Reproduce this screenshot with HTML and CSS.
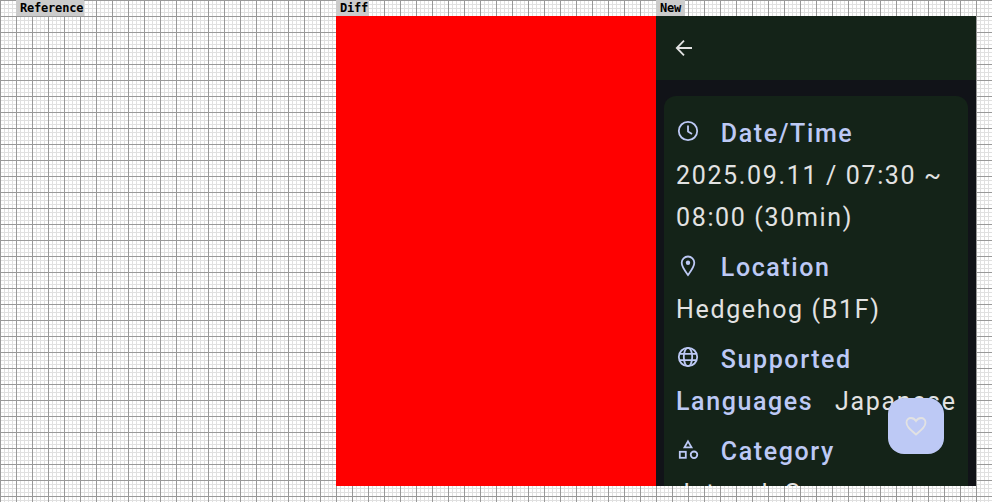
FILE: index.html
```html
<!DOCTYPE html>
<html>
<head>
    <title>Screenshot compare</title>
    <link rel="stylesheet" href="styles.css">
</head>
<body>
    <div class="sheet">
        <div class="column">
            <div class="tag">Reference</div>
            <div class="pane"></div>
        </div>
        <div class="column">
            <div class="tag">Diff</div>
            <div class="pane pane-diff"></div>
        </div>
        <div class="column">
            <div class="tag">New</div>
            <div class="pane pane-new">
                <header class="topbar">
                    <svg class="back" viewBox="0 0 24 24" width="24" height="24"><path d="M20 12H5M12 4.700 4.800 12l7.200 7.300"/></svg>
                </header>
                <div class="content">
                    <section class="card">
                        <div class="row">
                            <h2 class="heading">
                                <svg class="icon" viewBox="0 0 24 24" width="24" height="24"><circle cx="12" cy="12" r="9.200"/><path d="M12 6.500V12.500l4 2.500"/></svg>
                                Date/Time
                            </h2>
                            <p class="value">2025.09.11 / 07:30 ~ 08:00 (30min)</p>
                        </div>
                        <div class="row">
                            <h2 class="heading">
                                <svg class="icon" viewBox="0 0 24 24" width="24" height="24"><path d="M12 22c-1-1.500-6.300-7.800-6.300-12.200a6.300 6.300 0 0 1 12.600 0c0 4.400-5.300 10.700-6.300 12.200z"/><circle class="dot" cx="12" cy="9.800" r="2.200"/></svg>
                                Location
                            </h2>
                            <p class="value">Hedgehog (B1F)</p>
                        </div>
                        <div class="row">
                            <h2 class="heading heading-inline">
                                <svg class="icon" viewBox="0 0 24 24" width="24" height="24"><circle cx="12" cy="12" r="9.200"/><ellipse cx="12" cy="12" rx="4.200" ry="9.200"/><path d="M3.200 8.800h17.600M3.200 15.200h17.600"/></svg>
                                Supported Languages
                            </h2>
                            <span class="value value-inline">Japanese</span>
                        </div>
                        <div class="row">
                            <h2 class="heading">
                                <svg class="icon" viewBox="0 0 24 24" width="24" height="24"><path d="M12 4.400 15.500 10.400h-7z"/><rect x="3.800" y="14.800" width="6" height="6"/><circle cx="18" cy="17.800" r="3.300"/></svg>
                                Category
                            </h2>
                            <p class="value">Jetpack Compose</p>
                        </div>
                    </section>
                </div>
                <button class="fab">
                    <svg viewBox="0 0 24 24" width="24" height="24"><path d="M12 20.500C5 14.500 2.500 12 2.500 8.500 2.500 5.800 4.600 4 7 4c2 0 3.700 1 5 3 1.300-2 3-3 5-3 2.400 0 4.500 1.800 4.500 4.500 0 3.500-2.500 6-9.500 12z"/></svg>
                </button>
            </div>
        </div>
    </div>
</body>
</html>
```

FILE: styles.css
```css
html, body {
    margin: 0;
    height: 100%;
}

body {
    height: 502px;
    overflow: hidden;
    background-color: #fff;
    background-image:
        linear-gradient(#999 1px, transparent 1px),
        linear-gradient(90deg, #999 1px, transparent 1px),
        linear-gradient(#e0e0e0 1px, transparent 1px),
        linear-gradient(90deg, #e0e0e0 1px, transparent 1px);
    background-size: 16px 16px, 16px 16px, 4px 4px, 4px 4px;
}

.sheet {
    display: flex;
    padding-left: 16px;
}

.column {
    width: 320px;
    display: flex;
    flex-direction: column;
}

.tag {
    box-sizing: border-box;
    height: 16px;
    width: fit-content;
    min-width: 29px;
    padding: 0 1px 0 4px;
    background: #ccc;
    color: #000;
    font: bold 12px/16px "DejaVu Sans Mono", monospace;
    letter-spacing: -0.2px;
}

.pane {
    height: 470px;
}

.pane-diff {
    background: #f00;
}

.pane-new {
    position: relative;
    overflow: hidden;
    background: #111318;
    font-family: Roboto, sans-serif;
}

.topbar {
    height: 64px;
    display: flex;
    align-items: center;
    padding-left: 16px;
    background: #142318;
}

.back {
    fill: none;
    stroke: #e2e2e2;
    stroke-width: 1.800;
}

.content {
    padding: 16px 8px;
}

.card {
    padding: 17px 8px 17px 12px;
    border-radius: 12px;
    background: #142318;
    display: flex;
    flex-direction: column;
    gap: 8px;
}

.heading {
    margin: 0;
    color: #bdc9f5;
    font-size: 25px;
    font-weight: 500;
    line-height: 42px;
    letter-spacing: 1.600px;
}

.heading-inline {
    display: inline;
}

.icon {
    fill: none;
    stroke: #bdc9f5;
    stroke-width: 1.800;
    margin-right: 13px;
    vertical-align: -1px;
}

.dot {
    fill: #bdc9f5;
    stroke: none;
}

.value {
    margin: 0;
    color: #e2e2e2;
    font-size: 25px;
    line-height: 42px;
    letter-spacing: 1.650px;
}

.value-inline {
    margin-left: 14px;
}

.fab {
    position: absolute;
    right: 32px;
    bottom: 32px;
    width: 56px;
    height: 56px;
    display: flex;
    align-items: center;
    justify-content: center;
    padding: 0;
    border: 0;
    border-radius: 16px;
    background: #bdc9f5;
}

.fab svg {
    fill: none;
    stroke: #e2e2e2;
    stroke-width: 1.800;
}
```
